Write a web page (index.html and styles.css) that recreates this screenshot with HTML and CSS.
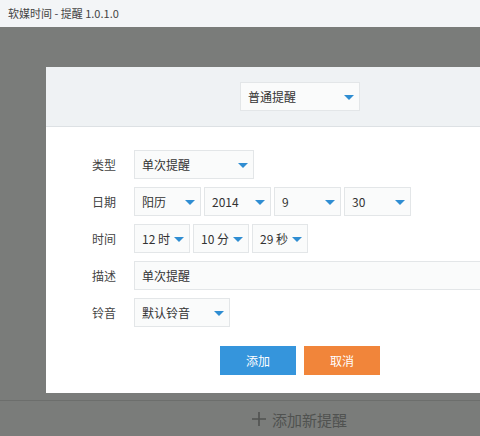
FILE: index.html
```html
<!DOCTYPE html>
<html lang="zh-CN">
<head>
    <meta charset="UTF-8">
    <title>软媒时间 - 提醒 1.0.1.0</title>
    <link rel="stylesheet" href="styles.css">
</head>
<body>
    <div class="titlebar">软媒时间 - 提醒 1.0.1.0</div>

    <div class="stage">
        <div class="dialog">
            <!-- 提醒类型 -->
            <div class="dialog-head">
                <div class="select head-select">普通提醒<span class="arrow"></span></div>
            </div>

            <div class="dialog-body">
                <div class="form-row">
                    <label>类型</label>
                    <div class="select w-type">单次提醒<span class="arrow"></span></div>
                </div>
                <div class="form-row">
                    <label>日期</label>
                    <div class="select w-date">阳历<span class="arrow"></span></div>
                    <div class="select w-date">2014<span class="arrow"></span></div>
                    <div class="select w-date">9<span class="arrow"></span></div>
                    <div class="select w-date">30<span class="arrow"></span></div>
                </div>
                <div class="form-row">
                    <label>时间</label>
                    <div class="select w-time">12 时<span class="arrow"></span></div>
                    <div class="select w-time">10 分<span class="arrow"></span></div>
                    <div class="select w-time">29 秒<span class="arrow"></span></div>
                </div>
                <div class="form-row">
                    <label>描述</label>
                    <div class="select w-desc">单次提醒</div>
                </div>
                <div class="form-row">
                    <label>铃音</label>
                    <div class="select w-ring">默认铃音<span class="arrow"></span></div>
                </div>

                <div class="actions">
                    <button class="btn btn-add">添加</button>
                    <button class="btn btn-cancel">取消</button>
                </div>
            </div>
        </div>

        <div class="footer">
            <svg class="plus" width="14" height="14" viewBox="0 0 14 14"><path d="M7 0v14M0 7h14" stroke="#505250" stroke-width="1.6" fill="none"/></svg>
            <span>添加新提醒</span>
        </div>
    </div>
</body>
</html>
```

FILE: styles.css
```css
body {
    margin: 0;
    width: 480px;
    height: 436px;
    overflow: hidden;
    font-family: "Noto Sans CJK SC", "Noto Sans", sans-serif;
    color: #333;
}
.titlebar {
    height: 27px;
    line-height: 26px;
    padding-left: 8px;
    font-size: 11px;
    color: #444;
    background-color: #f3f5f7;
}
.stage {
    height: 409px;
    padding-top: 40px;
    box-sizing: border-box;
    background-color: #7a7c7a;
}
.dialog {
    width: 434px;
    margin-left: 46px;
    background-color: #fff;
}
.dialog-head {
    height: 59px;
    display: flex;
    align-items: center;
    padding-left: 194px;
    background-color: #eff2f4;
    border-bottom: 1px solid #dde1e4;
}
.dialog-body {
    padding: 22px 0 18px 46px;
}
.form-row {
    display: flex;
    align-items: center;
    height: 30px;
    margin-bottom: 7px;
}
.form-row label {
    width: 42px;
    flex: none;
    font-size: 12px;
    color: #444;
}
.select {
    position: relative;
    height: 29px;
    line-height: 28px;
    padding-left: 7px;
    box-sizing: border-box;
    margin-right: 3px;
    font-size: 12px;
    color: #333;
    background-color: #fafbfb;
    border: 1px solid #e3e6e8;
    flex: none;
}
.arrow {
    position: absolute;
    right: 5px;
    top: 12px;
    width: 0;
    height: 0;
    border-left: 5px solid transparent;
    border-right: 5px solid transparent;
    border-top: 5px solid #2f8dd2;
}
.head-select { width: 120px; }
.w-type { width: 120px; }
.w-date { width: 67px; }
.w-time { width: 56px; }
.w-desc { flex: 1; margin-right: 0; border-right: none; }
.w-ring { width: 96px; }
.actions {
    display: flex;
    gap: 8px;
    margin: 19px 0 0 128px;
}
.btn {
    width: 76px;
    height: 29px;
    border: none;
    padding: 0;
    font-family: inherit;
    font-size: 12px;
    color: #fff;
}
.btn-add {
    background-color: #3595dc;
}
.btn-cancel {
    background-color: #f1853a;
}
.footer {
    margin-top: 7px;
    height: 36px;
    border-top: 1px solid #6c6e6c;
    display: flex;
    align-items: center;
    padding-left: 252px;
    gap: 6px;
    font-size: 15px;
    color: #505250;
}
```
